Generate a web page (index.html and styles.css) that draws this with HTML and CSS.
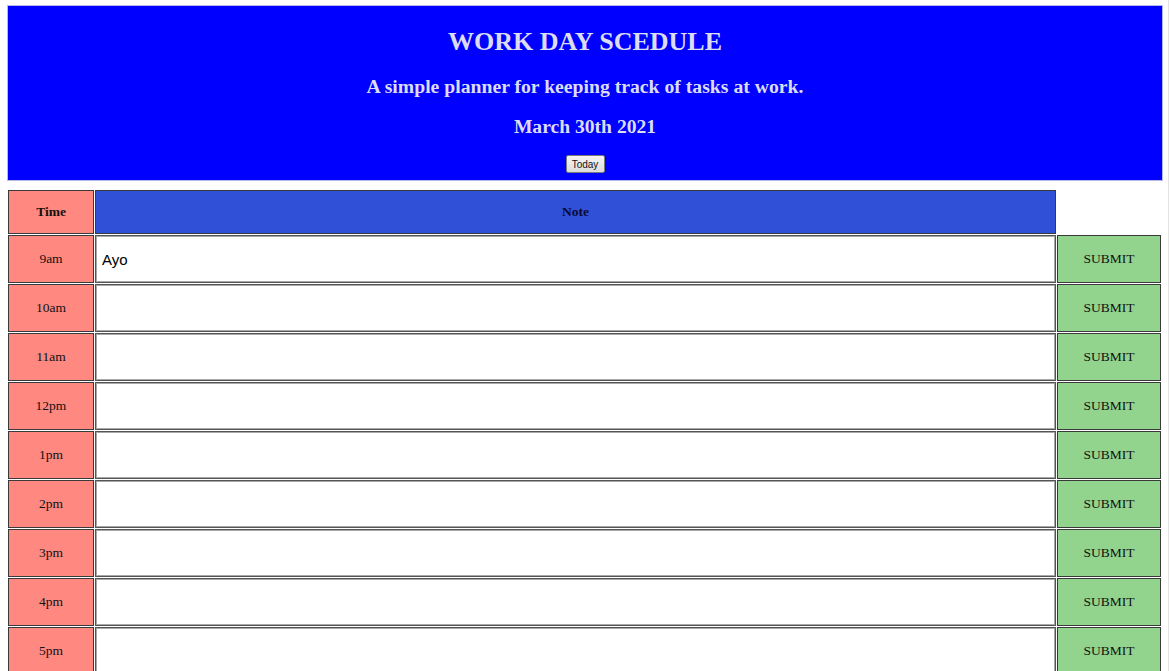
FILE: index.html
```html
<!DOCTYPE html>
<html lang="en">
<head>
<meta charset="utf-8">
<title>Work Day Scedule</title>
<link rel="stylesheet" href="styles.css">
</head>
<body>
<header class="jumbo">
  <h1 class="title">WORK DAY SCEDULE</h1>
  <p class="lead">A simple planner for keeping track of tasks at work.</p>
  <p class="date">March 30th 2021</p>
  <button class="today" type="button">Today</button>
</header>
<main class="planner">
  <div class="cell time head">Time</div>
  <div class="cell note-head">Note</div>
  <div class="blank"></div>

  <div class="cell time">9am</div>
  <div class="cell note"><input class="note-input" type="text" value="Ayo"></div>
  <button class="cell submit" type="button">SUBMIT</button>

  <div class="cell time">10am</div>
  <div class="cell note"><input class="note-input" type="text"></div>
  <button class="cell submit" type="button">SUBMIT</button>

  <div class="cell time">11am</div>
  <div class="cell note"><input class="note-input" type="text"></div>
  <button class="cell submit" type="button">SUBMIT</button>

  <div class="cell time">12pm</div>
  <div class="cell note"><input class="note-input" type="text"></div>
  <button class="cell submit" type="button">SUBMIT</button>

  <div class="cell time">1pm</div>
  <div class="cell note"><input class="note-input" type="text"></div>
  <button class="cell submit" type="button">SUBMIT</button>

  <div class="cell time">2pm</div>
  <div class="cell note"><input class="note-input" type="text"></div>
  <button class="cell submit" type="button">SUBMIT</button>

  <div class="cell time">3pm</div>
  <div class="cell note"><input class="note-input" type="text"></div>
  <button class="cell submit" type="button">SUBMIT</button>

  <div class="cell time">4pm</div>
  <div class="cell note"><input class="note-input" type="text"></div>
  <button class="cell submit" type="button">SUBMIT</button>

  <div class="cell time">5pm</div>
  <div class="cell note"><input class="note-input" type="text"></div>
  <button class="cell submit" type="button">SUBMIT</button>
</main>
</body>
</html>
```
FILE: styles.css
```css
html {
  margin: 0;
  padding: 0;
  overflow: hidden;
  background: #ffffff;
}

body {
  margin: 0;
  padding: 5px 0 0 7px;
  font-family: "Liberation Serif", "Times New Roman", serif;
  color: #111111;
  border-right: 1px solid #e4e4e4;
  margin-right: 2px;
  min-height: 671px;
  box-sizing: border-box;
}

.jumbo {
  background: #0000fe;
  border: 1px solid #b8b8ee;
  margin-right: 5px;
  height: 176px;
  box-sizing: border-box;
  display: flex;
  flex-direction: column;
  align-items: center;
  padding-top: 20px;
  color: #dcdcf4;
}

.title {
  margin: 0;
  font-size: 26px;
  line-height: 31px;
  font-weight: bold;
}

.lead {
  margin: 17px 0 0;
  font-size: 19.7px;
  line-height: 24px;
  font-weight: bold;
}

.date {
  margin: 17px 0 0;
  font-size: 19.6px;
  line-height: 24px;
  font-weight: bold;
}

.today {
  margin-top: 16px;
  width: 39px;
  height: 18px;
  padding: 0;
  font-family: "Liberation Sans", Arial, sans-serif;
  font-size: 10px;
  color: #111111;
  background: linear-gradient(#f4f4f4, #dcdcdc);
  border: 1px solid #7a7a7a;
  border-radius: 2px;
}

.planner {
  display: grid;
  grid-template-columns: 86px 961px 105px;
  grid-template-rows: 44px;
  grid-auto-rows: 48px;
  column-gap: 1px;
  row-gap: 1px;
  margin: 9px 0 0 1px;
}

.cell {
  box-sizing: border-box;
  border: 1px solid #3a3a3a;
  display: flex;
  align-items: center;
  justify-content: center;
  font-family: "Liberation Serif", "Times New Roman", serif;
  font-size: 13.5px;
  color: #111111;
}

.time {
  background: #ff8880;
}

.head {
  font-weight: bold;
}

.note-head {
  background: #3050d8;
  font-weight: bold;
  font-size: 13.5px;
  color: #0a0a30;
}

.note {
  background: #ffffff;
  border-color: #555555;
  padding: 0;
  align-items: stretch;
}

.note-input {
  width: 100%;
  box-sizing: border-box;
  border: 1px solid #a8a8a8;
  margin: 0;
  padding: 0 5px;
  font-family: "Liberation Sans", Arial, sans-serif;
  font-size: 15px;
  color: #000000;
  background: #ffffff;
  outline: none;
}

.submit {
  background: #92d38e;
  margin: 0;
  padding: 0;
  width: 104px;
  letter-spacing: 0;
}
```
